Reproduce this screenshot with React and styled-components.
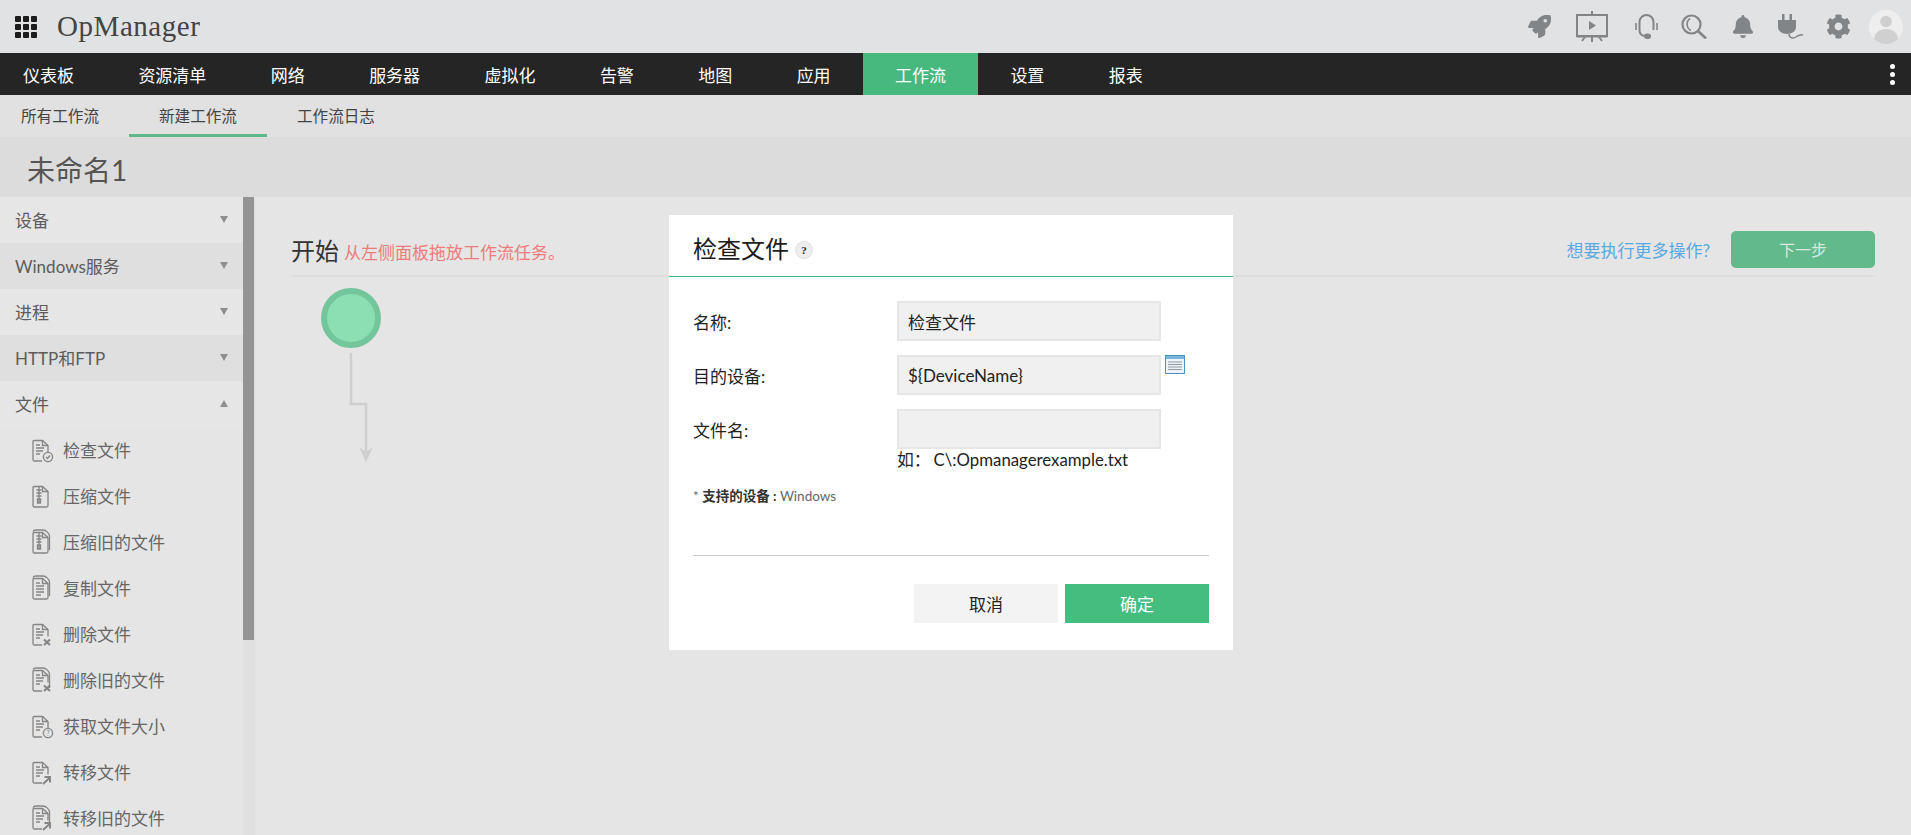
import React from "react";
import styled, { createGlobalStyle } from "styled-components";
import { FaBell, FaCog, FaRocket } from "react-icons/fa";

const sans = `Lato, "Noto Sans CJK SC", sans-serif`;

const GlobalStyle = createGlobalStyle`
  html, body {
    margin: 0;
    height: 100%;
    overflow: hidden;
    background: #e5e5e5;
    font-family: ${sans};
  }
`;

const Page = styled.div`
  position: relative;
  height: 835px;
  display: flex;
  flex-direction: column;
  overflow: hidden;
`;

const TopBar = styled.header`
  height: 53px;
  flex: none;
  display: flex;
  align-items: center;
  background: #e1e2e4;
`;
const AppGrid = styled.div`
  display: grid;
  grid-template-columns: repeat(3, 6px);
  grid-auto-rows: 6px;
  gap: 2px;
  margin-left: 15px;
  span {
    background: #1c1c1c;
    border-radius: 1px;
  }
`;
const Logo = styled.div`
  margin-left: 20px;
  font-family: "Liberation Serif", serif;
  font-size: 29px;
  letter-spacing: 0.55px;
  color: #444;
`;
const ToolIcons = styled.div`
  margin-left: auto;
  display: flex;
  align-items: center;
  color: #828587;
`;
const ToolSlot = styled.div`
  width: ${(p) => p.$w}px;
  margin-left: ${(p) => p.$gap}px;
  display: flex;
  justify-content: center;
`;
const Avatar = styled.div`
  width: 34px;
  height: 34px;
  margin: 0 8px 0 18px;
  border-radius: 50%;
  background: #eeeeee;
  overflow: hidden;
  display: flex;
`;

const Nav = styled.nav`
  height: 42px;
  flex: none;
  display: flex;
  align-items: stretch;
  padding-left: 23px;
  background: #252525;
`;
const NavItem = styled.a`
  display: flex;
  align-items: center;
  padding: 0 32.2px;
  font-size: 17px;
  color: #fff;
  background: ${(p) => (p.$active ? "#47b97e" : "transparent")};
  &:first-child {
    padding-left: 0;
  }
`;
const NavDots = styled.div`
  margin: 0 16px 0 auto;
  display: flex;
  flex-direction: column;
  justify-content: center;
  gap: 3px;
  span {
    width: 5px;
    height: 5px;
    border-radius: 50%;
    background: #fff;
  }
`;

const SubNav = styled.div`
  height: 42px;
  flex: none;
  box-sizing: border-box;
  display: flex;
  padding-left: 21px;
  background: #e1e1e1;
`;
const SubTab = styled.a`
  display: flex;
  align-items: center;
  box-sizing: border-box;
  padding: 0 30px;
  font-size: 15.6px;
  color: #444;
  border-bottom: 3px solid ${(p) => (p.$active ? "#5fb88c" : "transparent")};
  &:first-child {
    padding-left: 0;
  }
`;

const TitleBar = styled.div`
  height: 60px;
  flex: none;
  box-sizing: border-box;
  display: flex;
  align-items: center;
  padding: 4px 0 0 27px;
  font-size: 28px;
  color: #555;
  background: #dcdcdc;
`;

const Body = styled.div`
  flex: 1;
  min-height: 0;
  display: flex;
`;
const Sidebar = styled.aside`
  width: 243px;
  flex: none;
  overflow: hidden;
  background: #e5e5e5;
`;
const GroupRow = styled.div`
  height: 46px;
  box-sizing: border-box;
  display: flex;
  align-items: center;
  justify-content: space-between;
  padding: 0 15px 2px 15px;
  font-size: 17px;
  color: #5c5c5c;
  background: ${(p) => (p.$dark ? "#dfdfe0" : "#e6e6e6")};
`;
const Caret = styled.span`
  width: 0;
  height: 0;
  border-left: 4.5px solid transparent;
  border-right: 4.5px solid transparent;
  border-top: ${(p) => (p.$up ? "0" : "7px solid #8e8e8e")};
  border-bottom: ${(p) => (p.$up ? "7px solid #8e8e8e" : "0")};
`;
const TaskRow = styled.div`
  height: 46px;
  box-sizing: border-box;
  display: flex;
  align-items: center;
  gap: 9px;
  padding: 0 0 1px 29px;
  font-size: 17px;
  color: #666;
`;
const ScrollTrack = styled.div`
  width: 12px;
  flex: none;
  background: #e0e0e0;
`;
const ScrollThumb = styled.div`
  width: 11px;
  height: 443px;
  background: #949494;
`;

const Main = styled.main`
  flex: 1;
  padding: 0 36px;
`;
const StartHead = styled.div`
  height: 80px;
  box-sizing: border-box;
  padding-top: 26px;
  display: flex;
  align-items: center;
  border-bottom: 2px solid #dedede;
`;
const StartTitle = styled.span`
  font-size: 24px;
  color: #333;
`;
const StartHint = styled.span`
  margin-left: 5px;
  font-size: 17px;
  padding-top: 4px;
  color: #ee7b7b;
`;
const MoreLink = styled.a`
  margin-left: auto;
  font-size: 17px;
  color: #5aa9e2;
`;
const NextButton = styled.button`
  width: 144px;
  height: 37px;
  margin-left: 21px;
  border: 0;
  border-radius: 5px;
  font: 16px ${sans};
  color: #d6ebdf;
  background: #62b98b;
`;
const Flow = styled.div`
  padding: 11px 0 0 30px;
`;
const StartNode = styled.div`
  width: 60px;
  height: 60px;
  box-sizing: border-box;
  border-radius: 50%;
  border: 6px solid #73c69c;
  background: #8cdfb3;
`;
const Connector = styled.svg`
  display: block;
  margin: 5px 0 0 26px;
`;

const Modal = styled.section`
  position: absolute;
  left: 669px;
  top: 215px;
  width: 564px;
  height: 435px;
  background: #fff;
  color: #222;
`;
const ModalHead = styled.div`
  height: 62px;
  box-sizing: border-box;
  padding: 3px 24px 0;
  display: flex;
  align-items: center;
  gap: 6px;
  font-size: 24px;
  color: #1c1c1c;
  border-bottom: 1px solid #45bd7f;
`;
const HelpBadge = styled.span`
  width: 18px;
  height: 18px;
  margin-top: 5px;
  border-radius: 50%;
  background: #eeeeee;
  border: 1px solid #e2e2e2;
  box-sizing: border-box;
  display: flex;
  align-items: center;
  justify-content: center;
  font: bold 11px "Liberation Serif", serif;
  color: #222;
`;
const ModalBody = styled.div`
  padding: 24px 24px 0;
`;
const FormRow = styled.div`
  display: grid;
  grid-template-columns: 204px 264px 24px;
  grid-auto-rows: 44px;
  margin-bottom: 10px;
`;
const FieldLabel = styled.label`
  font-size: 17px;
  line-height: 44px;
  color: #222;
`;
const FieldBox = styled.div`
  height: 40px;
  box-sizing: border-box;
  padding: 0 9px;
  display: flex;
  align-items: center;
  font-size: 17px;
  color: #222;
  background: #f0f0f0;
  border: 2px solid #e6e6e6;
`;
const ListIcon = styled.svg`
  margin-left: 4px;
`;
const Example = styled.div`
  margin-top: -16px;
  padding-left: 204px;
  font-size: 16.8px;
  line-height: 26px;
  color: #222;
  span {
    margin-right: 3px;
  }
`;
const Note = styled.div`
  margin-top: 14px;
  font-size: 13.5px;
  line-height: 18px;
  color: #666;
  font-weight: 400;
  b {
    font-weight: 700;
    color: #333;
  }
`;
const Rule = styled.hr`
  margin: 50px 0 28px;
  border: 0;
  border-top: 1px solid #c9c9c9;
`;
const Buttons = styled.div`
  display: flex;
  justify-content: flex-end;
  gap: 7px;
`;
const DialogButton = styled.button`
  width: 144px;
  height: 39px;
  border: 0;
  font: 17px ${sans};
  color: ${(p) => (p.$primary ? "#fff" : "#222")};
  background: ${(p) => (p.$primary ? "#45bd7f" : "#f3f3f3")};
`;

const Presentation = () => (
  <svg width="32" height="31" viewBox="0 0 32 31" fill="none" stroke="currentColor">
    <path d="M16 0v4M1 4h30v21H1z" strokeWidth="2" />
    <path d="M13 10l7 4.5-7 4.500z" fill="currentColor" stroke="none" />
    <path d="M0.500 25.500h31" strokeWidth="2" />
    <path d="M16 26v5M9 26l-3 4M23 26l3 4" strokeWidth="2" />
  </svg>
);
const Headset = () => (
  <svg width="23" height="25" viewBox="0 0 23 25" fill="none" stroke="currentColor" strokeWidth="2">
    <path d="M4.500 16V8a7 7 0 0 1 14 0v8" />
    <path d="M1 9v7M22 9v7" strokeWidth="1.600" />
    <path d="M4.500 16c0 4 2 6 6 6.200" />
    <ellipse cx="12.500" cy="22.300" rx="2.600" ry="1.800" fill="currentColor" />
  </svg>
);
const Search = () => (
  <svg width="26" height="25" viewBox="0 0 26 25" fill="none" stroke="currentColor">
    <circle cx="10.500" cy="10.500" r="9" strokeWidth="2.200" />
    <path d="M9 4.500a7 7 0 0 0 1 12" strokeWidth="1.600" />
    <path d="M17 17l8 7.500" strokeWidth="2.600" />
  </svg>
);
const Plug = () => (
  <svg width="27" height="26" viewBox="0 0 27 26" fill="none">
    <path d="M5 0h2.500v6H5zM12.500 0H15v6h-2.500z" fill="currentColor" />
    <path d="M1 6h18v7c0 4-4 7-9 7s-9-3-9-7z" fill="currentColor" />
    <path d="M12 20c0 4 4 5 7 3s4-3 7-2" stroke="currentColor" strokeWidth="1.500" />
  </svg>
);
const AvatarFigure = () => (
  <svg width="34" height="34" viewBox="0 0 34 34">
    <circle cx="17" cy="11.500" r="5.800" fill="#cfcfcf" />
    <path d="M5 30c0-7 5-11 12-11s12 4 12 11v4H5z" fill="#d0d0d0" />
  </svg>
);

// one drawing for every task icon: page, optional second sheet behind, and a corner badge
const TaskIcon = ({ kind, stacked }) => {
  const plain = kind === "zip" || kind === "lines";
  return (
    <svg width="25" height="26" viewBox="0 0 25 26" fill="none" stroke="#858585" strokeWidth="1.300">
      {stacked && <path d="M4 2.500C4.500 1 6 1 7 1h7c3 0 6 3 6.500 6v14" />}
      <path
        d={
          plain
            ? "M5 3.500h8.500l5.500 5v14c0 1-.5 1.500-1.500 1.500h-12c-1 0-1.500-.5-1.500-1.500v-18c0-.5.500-1 1-1z"
            : "M13 24H5.500c-1 0-1.500-.5-1.500-1.500v-18c0-.5.500-1 1-1h8.500l5.500 5v7"
        }
      />
      <path d="M13.500 3.500v5H19" />
      {kind === "zip" ? (
        <path d="M10 3.500v16M7.500 7h5M7.500 10h5M7.500 13h5M8.500 16h3v4h-3z" />
      ) : (
        <path d={plain ? "M7 8h4M7 11h8M7 14h8M7 17h8M7 20h5" : "M7 8h4M7 11h8M7 14h7M7 17h4"} />
      )}
      {kind === "check" && (
        <g>
          <circle cx="19" cy="20" r="4.600" />
          <path d="M17 20l1.500 1.500 2.500-3" />
        </g>
      )}
      {kind === "delete" && <path d="M15 18.500l6 5.500M21 18.500l-6 5.500" strokeWidth="2.200" />}
      {kind === "size" && (
        <g>
          <circle cx="19" cy="20" r="4.600" />
          <text x="19" y="22.500" textAnchor="middle" fontSize="7" fill="#858585" stroke="none">?</text>
        </g>
      )}
      {kind === "move" && <path d="M14 25l7-6.500M15.500 18h5.500v5.500" strokeWidth="1.900" />}
    </svg>
  );
};

const navItems = ["仪表板", "资源清单", "网络", "服务器", "虚拟化", "告警", "地图", "应用", "工作流", "设置", "报表"];
const groups = ["设备", "Windows服务", "进程", "HTTP和FTP"];
const tasks = [
  ["检查文件", "check", false],
  ["压缩文件", "zip", false],
  ["压缩旧的文件", "zip", true],
  ["复制文件", "lines", true],
  ["删除文件", "delete", false],
  ["删除旧的文件", "delete", true],
  ["获取文件大小", "size", false],
  ["转移文件", "move", false],
  ["转移旧的文件", "move", true],
];

const App = () => {
  return (
    <Page>
      <GlobalStyle />
      <TopBar>
        <AppGrid>
          {Array.from({ length: 9 }, (_, i) => (
            <span key={i} />
          ))}
        </AppGrid>
        <Logo>OpManager</Logo>
        <ToolIcons>
          <ToolSlot $w={24} $gap={0}><FaRocket size={23} /></ToolSlot>
          <ToolSlot $w={32} $gap={25}><Presentation /></ToolSlot>
          <ToolSlot $w={23} $gap={27}><Headset /></ToolSlot>
          <ToolSlot $w={26} $gap={23}><Search /></ToolSlot>
          <ToolSlot $w={22} $gap={25}><FaBell size={23} /></ToolSlot>
          <ToolSlot $w={27} $gap={23}><Plug /></ToolSlot>
          <ToolSlot $w={25} $gap={22}><FaCog size={25} /></ToolSlot>
          <Avatar><AvatarFigure /></Avatar>
        </ToolIcons>
      </TopBar>

      <Nav>
        {navItems.map((item) => (
          <NavItem key={item} $active={item === "工作流"}>{item}</NavItem>
        ))}
        <NavDots><span /><span /><span /></NavDots>
      </Nav>

      <SubNav>
        <SubTab>所有工作流</SubTab>
        <SubTab $active>新建工作流</SubTab>
        <SubTab>工作流日志</SubTab>
      </SubNav>

      <TitleBar>未命名1</TitleBar>

      <Body>
        <Sidebar>
          {groups.map((group, i) => (
            <GroupRow key={group} $dark={i % 2 === 1}>
              {group}
              <Caret />
            </GroupRow>
          ))}
          <GroupRow>
            文件
            <Caret $up />
          </GroupRow>
          {tasks.map(([label, kind, stacked]) => (
            <TaskRow key={label}>
              <TaskIcon kind={kind} stacked={stacked} />
              {label}
            </TaskRow>
          ))}
        </Sidebar>
        <ScrollTrack>
          <ScrollThumb />
        </ScrollTrack>

        <Main>
          <StartHead>
            <StartTitle>开始</StartTitle>
            <StartHint>从左侧面板拖放工作流任务。</StartHint>
            <MoreLink>想要执行更多操作?</MoreLink>
            <NextButton>下一步</NextButton>
          </StartHead>
          <Flow>
            <StartNode />
            <Connector width="30" height="112" viewBox="0 0 30 112" fill="none">
              <path d="M4 0v51h15v52" stroke="#cfcfcf" strokeWidth="2.500" />
              <path d="M12 94l7 5 7-5-7 15z" fill="#cfcfcf" />
            </Connector>
          </Flow>
        </Main>
      </Body>

      <Modal>
        <ModalHead>
          检查文件
          <HelpBadge>?</HelpBadge>
        </ModalHead>
        <ModalBody>
          <FormRow>
            <FieldLabel>名称:</FieldLabel>
            <FieldBox>检查文件</FieldBox>
          </FormRow>
          <FormRow>
            <FieldLabel>目的设备:</FieldLabel>
            <FieldBox>{"${DeviceName}"}</FieldBox>
            <ListIcon width="20" height="19" viewBox="0 0 20 19">
              <rect x="0.500" y="0.500" width="19" height="18" fill="#eef3f7" stroke="#4b92c4" />
              <rect x="1" y="1" width="18" height="3" fill="#7fb4da" />
              <path d="M3 7h14M3 9.500h14M3 12h14M3 14.500h14" stroke="#8f9aa3" />
            </ListIcon>
          </FormRow>
          <FormRow>
            <FieldLabel>文件名:</FieldLabel>
            <FieldBox />
          </FormRow>
          <Example>
            <span>如：</span>C\:Opmanagerexample.txt
          </Example>
          <Note>
            * <b>支持的设备 :</b> Windows
          </Note>
          <Rule />
          <Buttons>
            <DialogButton>取消</DialogButton>
            <DialogButton $primary>确定</DialogButton>
          </Buttons>
        </ModalBody>
      </Modal>
    </Page>
  );
};

export default App;
